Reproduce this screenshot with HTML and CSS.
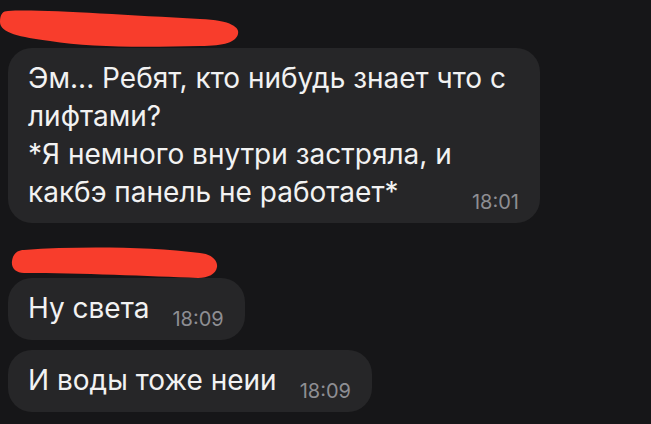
FILE: index.html
```html
<!DOCTYPE html>
<html lang="ru">
<head>
  <meta charset="UTF-8" />
  <meta name="viewport" content="width=device-width, initial-scale=1.0"/>
  <title>Чат</title>
  <link rel="stylesheet" href="styles.css">
</head>
<body>
  <div class="chat">
    <!-- скрытое имя отправителя -->
    <svg class="sender sender-top" width="651" height="48" viewBox="0 0 651 48">
      <path d="M8 11 C40 9 120 15 200 19 C232 20 240 28 238 34 C236 42 225 46 200 46 C150 47 90 48 50 41 C20 37 0 33 0 22 C0 14 3 11 8 11 Z" />
    </svg>
    <div class="bubble wide">
      <p class="text">Эм... Ребят, кто нибудь знает что с<br>лифтами?<br>*Я немного внутри застряла, и<br>какбэ панель не работает*<span class="time end">18:01</span></p>
    </div>

    <svg class="sender sender-mid" width="651" height="55" viewBox="0 0 651 55">
      <path d="M24 27 C80 23 150 24 200 30 C212 31 218 38 217 44 C216 51 208 55 198 55 C150 53 80 50 24 50 C16 50 11 45 12 38 C13 31 17 27 24 27 Z" />
    </svg>
    <div class="bubble">
      <p class="text">Ну света<span class="time">18:09</span></p>
    </div>
    <div class="bubble">
      <p class="text">И воды тоже неии<span class="time">18:09</span></p>
    </div>
  </div>
</body>
</html>
```
FILE: styles.css
```css
body {
  margin: 0;
  background-color: #161618;
  font-family: Inter, 'Liberation Sans', sans-serif;
  color: #f2f2f2;
}

.chat {
  display: flex;
  flex-direction: column;
  align-items: flex-start;
  padding-left: 8px;
}

.sender {
  display: block;
  margin-left: -8px;
}

.sender path {
  fill: #f83d2c;
}

.bubble {
  background-color: #262628;
  border-radius: 24px;
  padding: 11px 21px 11px 20px;
  margin-bottom: 10px;
}

.bubble.wide {
  width: 532px;
  box-sizing: border-box;
  margin-bottom: 0;
}

.text {
  margin: 0;
  font-size: 28px;
  line-height: 38px;
  white-space: nowrap;
}

.time {
  display: inline-block;
  margin-left: 23px;
  font-size: 20px;
  line-height: 20px;
  color: #8e8e93;
  vertical-align: -8px;
}

.time.end {
  float: right;
  margin-top: 19px;
}
```
